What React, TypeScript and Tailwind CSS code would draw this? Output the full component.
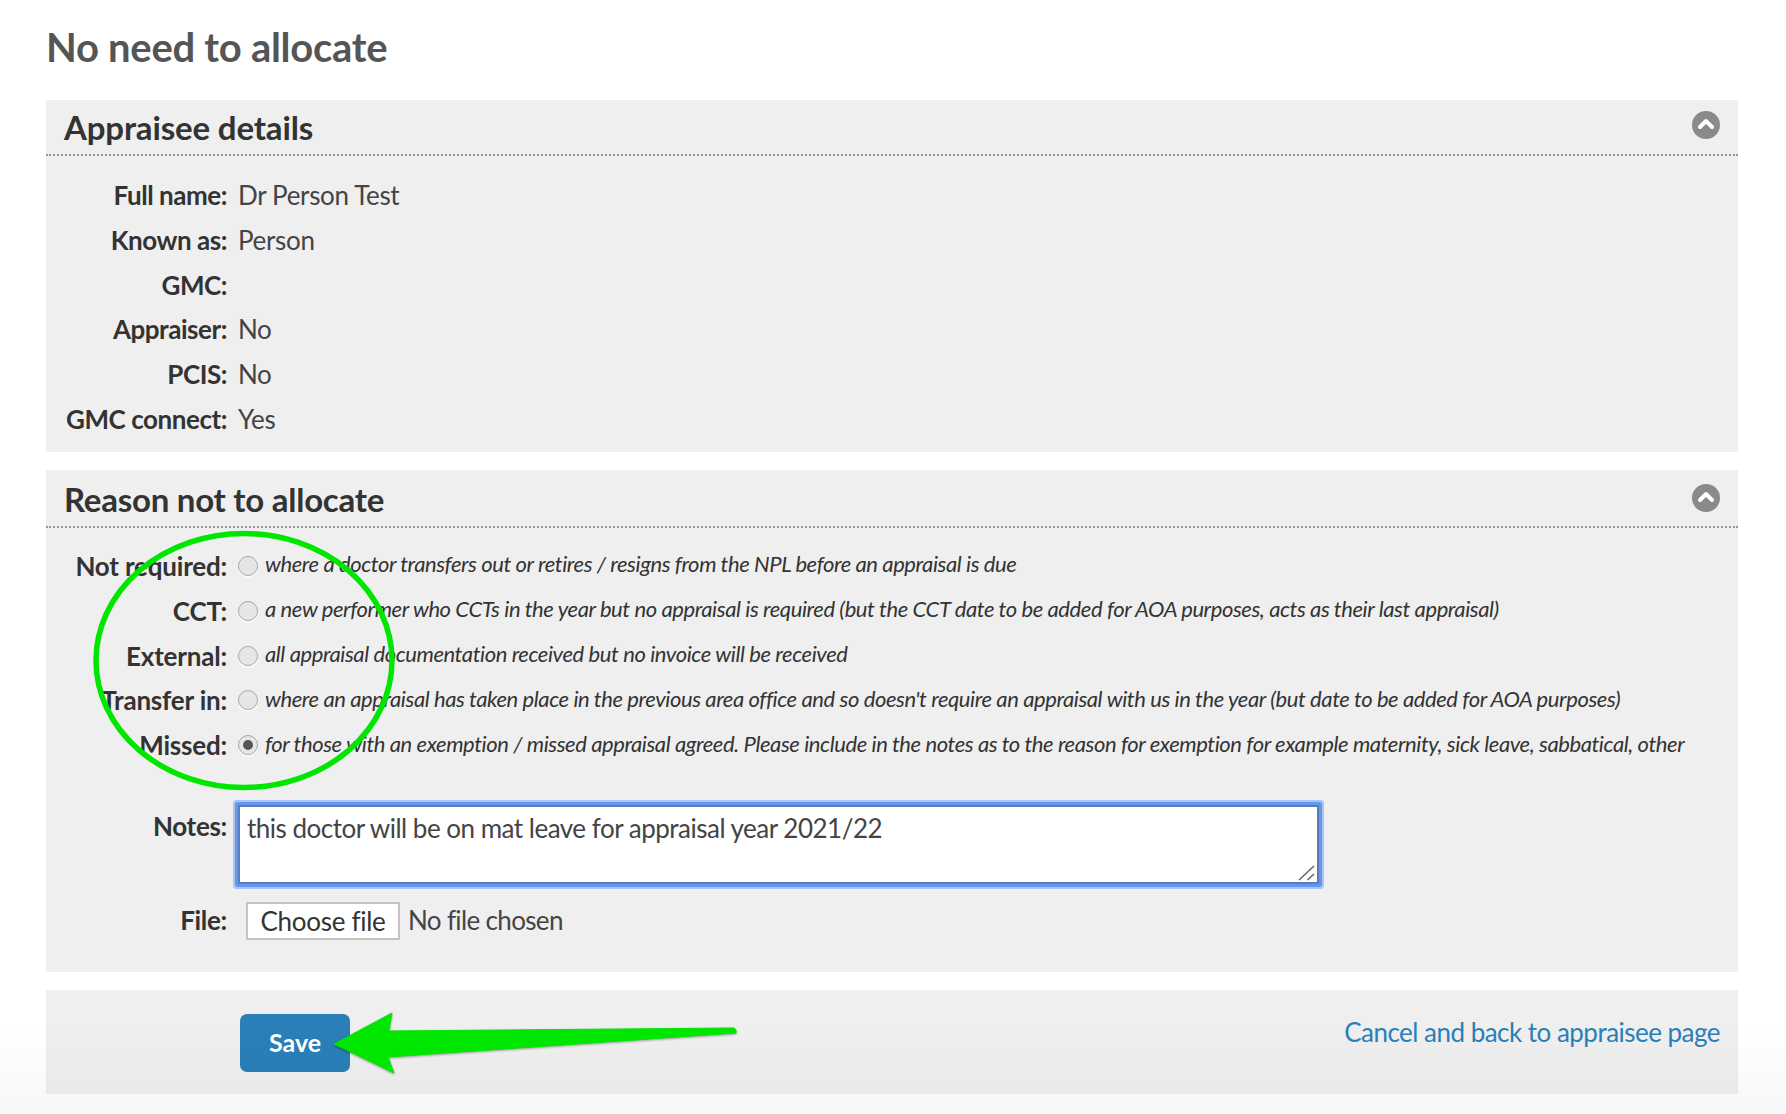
import { ChevronUp } from "lucide-react";

const details = [
  { label: "Full name:", value: "Dr Person Test", height: "h-[46px]" },
  { label: "Known as:", value: "Person", height: "h-[45px]" },
  { label: "GMC:", value: "", height: "h-[44px]" },
  { label: "Appraiser:", value: "No", height: "h-[45px]" },
  { label: "PCIS:", value: "No", height: "h-[45px]" },
  { label: "GMC connect:", value: "Yes", height: "h-[45px]" },
];

const reasons = [
  {
    label: "Not required:",
    text: "where a doctor transfers out or retires / resigns from the NPL before an appraisal is due",
    height: "h-[44px]",
  },
  {
    label: "CCT:",
    text: "a new performer who CCTs in the year but no appraisal is required (but the CCT date to be added for AOA purposes, acts as their last appraisal)",
    height: "h-[46px]",
  },
  {
    label: "External:",
    text: "all appraisal documentation received but no invoice will be received",
    height: "h-[44px]",
  },
  {
    label: "Transfer in:",
    text: "where an appraisal has taken place in the previous area office and so doesn't require an appraisal with us in the year (but date to be added for AOA purposes)",
    height: "h-[45px]",
  },
  {
    label: "Missed:",
    text: "for those with an exemption / missed appraisal agreed. Please include in the notes as to the reason for exemption for example maternity, sick leave, sabbatical, other",
    height: "h-[45px]",
    checked: true,
  },
];

type PanelProps = {
  title: string;
  headerHeight: string;
  titleOffset: string;
  iconOffset: string;
  children: React.ReactNode;
};

function Panel({ title, headerHeight, titleOffset, iconOffset, children }: PanelProps) {
  return (
    <section className="bg-[#efefef]">
      <div className={`flex items-center justify-between border-b-2 border-dotted border-[#999] pl-[18px] pr-[18px] ${headerHeight}`}>
        <h2 className={`text-[33px] font-bold leading-none tracking-[-0.15px] text-[#333] ${titleOffset}`}>{title}</h2>
        <span className={`flex h-[28px] w-[28px] items-center justify-center rounded-full bg-[#8a8a8a] ${iconOffset}`}>
          <ChevronUp size={24} strokeWidth={4} className="mb-[2px] text-white" />
        </span>
      </div>
      {children}
    </section>
  );
}

export default function App() {
  return (
    <div className="relative h-[1114px] overflow-hidden bg-white pl-[46px] pr-[48px] font-['Lato',sans-serif] text-[26px] tracking-[-0.45px] text-[#444]">
      <h1 className="flex h-[100px] items-start pt-[22px] text-[40px] font-bold leading-[50px] tracking-[-0.28px] text-[#555]">
        No need to allocate
      </h1>

      <div className="flex flex-col gap-[18px]">
        <Panel title="Appraisee details" headerHeight="h-[56px]" titleOffset="mt-0" iconOffset="mb-[4px]">
          <div className="pb-[10px] pt-[16px]">
            {details.map((row) => (
              <div key={row.label} className={`flex items-center gap-[11px] ${row.height}`}>
                <span className="w-[181px] text-right font-bold text-[#333]">{row.label}</span>
                <span className="tracking-[-0.33px]">{row.value}</span>
              </div>
            ))}
          </div>
        </Panel>

        <Panel title="Reason not to allocate" headerHeight="h-[58px]" titleOffset="mt-[2px] tracking-[-0.25px]" iconOffset="mb-0">
          <div className="pb-[32px] pt-[16px]">
            {reasons.map((row) => (
              <div key={row.label} className={`flex items-center ${row.height}`}>
                <span className="w-[181px] text-right font-bold tracking-[-0.2px] text-[#333]">{row.label}</span>
                <span className="mb-[1px] ml-[11px] mr-[7px] flex h-[20px] w-[20px] items-center justify-center rounded-full border border-[#a8a8a8] bg-[#e6e6e6] shadow-[0_2px_1px_#fafafa]">
                  {row.checked && <span className="h-[10px] w-[10px] rounded-full bg-[#555]" />}
                </span>
                <span className="mb-[5px] whitespace-nowrap text-[22px] italic tracking-[-0.41px] text-[#333]">
                  {row.text}
                </span>
              </div>
            ))}

            <div className="mt-[37px] flex items-start">
              <span className="mt-[2px] w-[181px] text-right font-bold tracking-[-0.3px] text-[#333]">Notes:</span>
              <textarea
                defaultValue="this doctor will be on mat leave for appraisal year 2021/22"
                className="ml-[11px] h-[79px] w-[1081px] resize-none rounded-[1px] border-2 border-[#5c7cb5] bg-white px-[7px] py-[3px] text-[26px] leading-[36px] tracking-[-0.5px] text-[#444] shadow-[0_0_0_3px_#6497f0,0_0_0_5px_#a8c5f5] outline-none"
              />
            </div>

            <div className="mt-[17px] flex items-center">
              <span className="w-[181px] text-right font-bold tracking-[-0.3px] text-[#333]">File:</span>
              <button className="ml-[19px] h-[38px] w-[154px] border-2 border-[#c4c4c4] bg-white text-[26px] leading-none tracking-[-0.3px] text-[#333]">
                Choose file
              </button>
              <span className="ml-[8px] tracking-[-0.65px]">No file chosen</span>
            </div>
          </div>
        </Panel>

        <footer className="flex h-[104px] items-center justify-between bg-[#efefef] pl-[194px] pr-[18px]">
          <button className="mt-[1px] h-[58px] w-[110px] rounded-[7px] bg-[#2a7fb8] text-[25px] font-bold tracking-normal text-white">
            Save
          </button>
          <a className="mb-[19px] tracking-[-0.52px] text-[#2a7fb8]">Cancel and back to appraisee page</a>
        </footer>
      </div>

      {/* fade at the bottom of the capture */}
      <div className="pointer-events-none absolute inset-x-0 bottom-0 h-[90px] bg-gradient-to-b from-transparent to-black/[0.03]" />

      {/* resize grip and hand drawn annotations */}
      <svg className="pointer-events-none absolute left-0 top-0" width="1786" height="1114">
        <path d="M1299 880 L1314 866 M1307.5 880 L1314 874" stroke="#666" strokeWidth="1.5" fill="none" />
        <ellipse cx="244" cy="660.5" rx="148" ry="127" fill="none" stroke="#00e600" strokeWidth="5.5" />
        <path
          d="M334 1044 L392 1013 L389 1031 L734 1028 Q737 1030 736 1033 L388 1057 L394 1073 Z"
          fill="#00e600"
          stroke="#00e600"
          strokeLinejoin="round"
          className="drop-shadow-[0_1px_1px_rgba(0,0,0,0.35)]"
        />
      </svg>
    </div>
  );
}
